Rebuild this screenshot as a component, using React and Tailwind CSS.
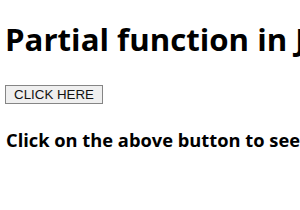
export default function App() {
  return (
    <div className="min-h-[210px] overflow-hidden bg-white px-[5px] pt-[19px] text-black" style={{ fontFamily: '"Open Sans", "Noto Sans", sans-serif' }}>
      <h1 className="whitespace-nowrap text-[31.2px] font-bold leading-[40px]">Partial function in JavaScript</h1>
      <div className="mt-[26px] flex">
        <button className="h-[19px] w-[98px] border border-[#858585] bg-[#efefef] text-[13.3px] leading-[17px] text-[#111]" style={{ fontFamily: '"Liberation Sans", Arial, sans-serif' }}>
          CLICK HERE
        </button>
      </div>
      <h3 className="mt-[24px] whitespace-nowrap pl-[1px] text-[18.3px] font-bold leading-[24px]">Click on the above button to see the result</h3>
    </div>
  )
}
